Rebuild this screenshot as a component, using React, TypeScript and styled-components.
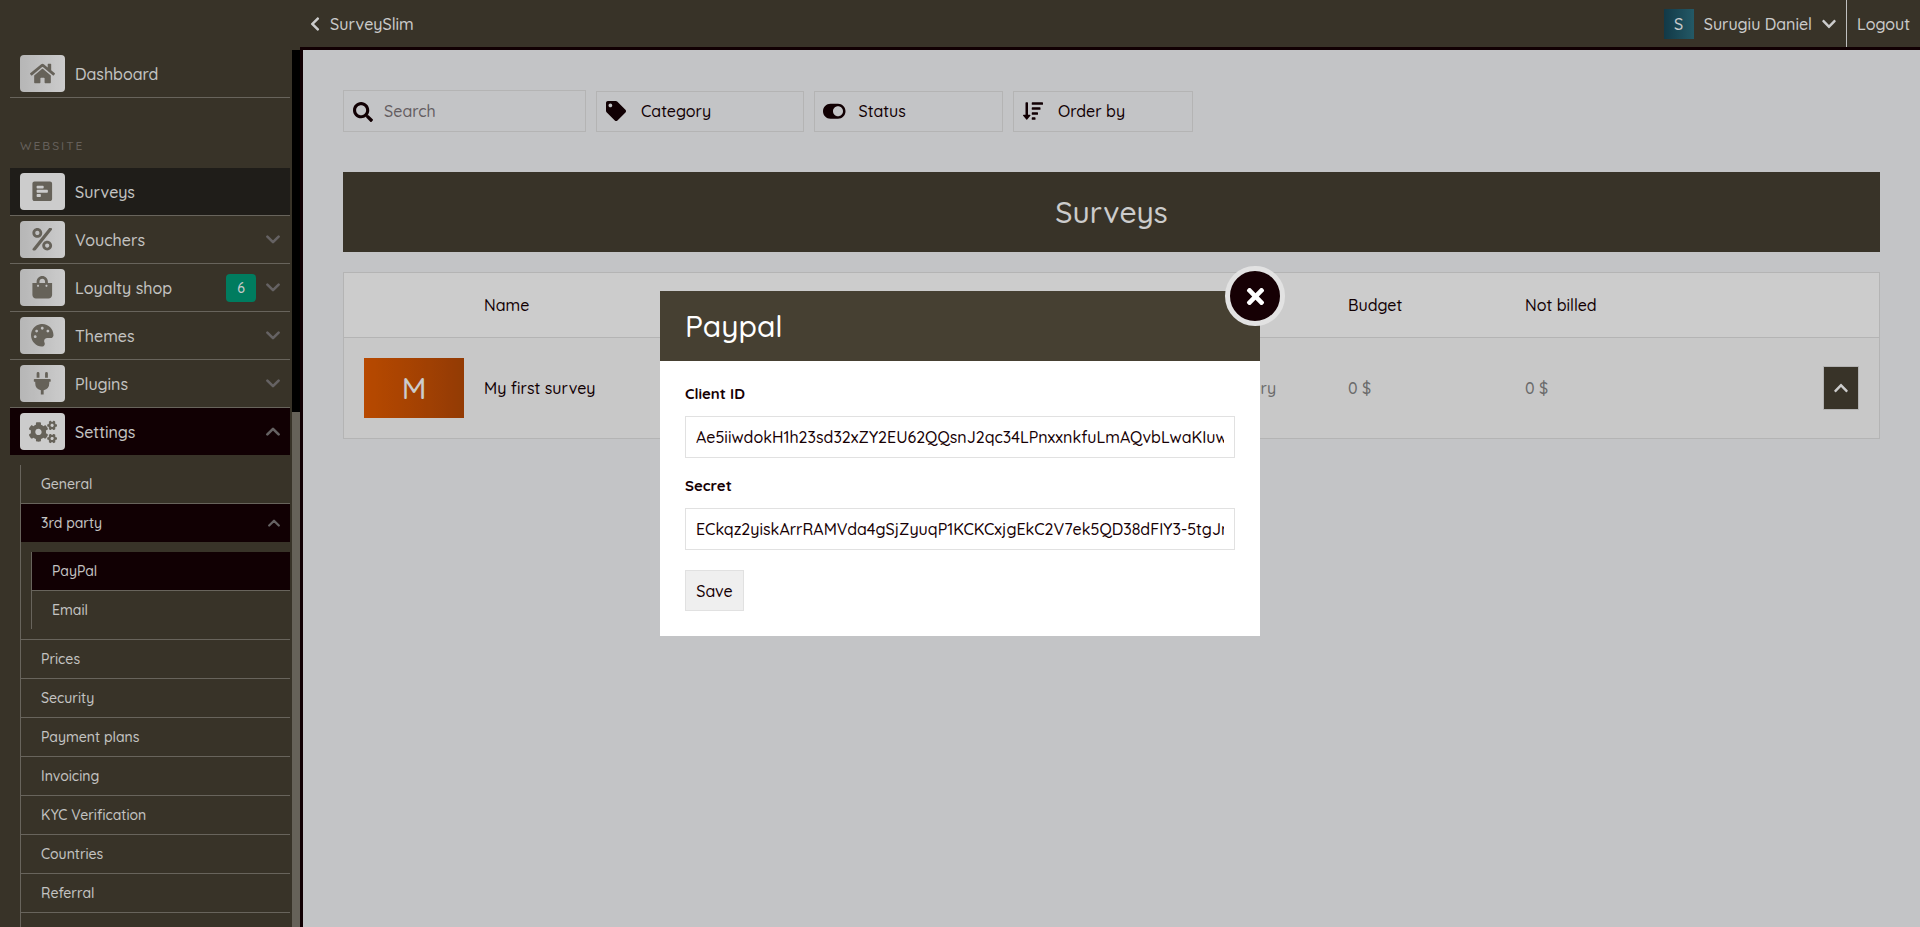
import React, { ReactNode } from 'react';
import styled, { createGlobalStyle, css } from 'styled-components';
import {
  FaChevronDown,
  FaChevronLeft,
  FaChevronUp,
  FaCogs,
  FaHome,
  FaPalette,
  FaPercent,
  FaPlug,
  FaPollH,
  FaSearch,
  FaShoppingBag,
  FaSortAmountDown,
  FaTag,
  FaTimes,
  FaToggleOn,
} from 'react-icons/fa';

const color = {
  brand: '#464032',
  dark: '#160004',
  line: '#837d73',
  border: '#e1e1e1',
  page: '#f4f5f8',
};

const GlobalStyle = createGlobalStyle`
  *, *::before, *::after { box-sizing: border-box; }
  html, body { margin: 0; height: 100%; overflow: hidden; }
  body {
    font-family: Quicksand, Lato, sans-serif;
    font-size: 16px;
    font-weight: 500;
    line-height: 20px;
    color: ${color.dark};
    background: ${color.page};
  }
  #root { height: 100%; }
  svg { display: block; flex: none; }
  input, button { font: inherit; color: inherit; }
`;

const Text = styled.span`
  white-space: nowrap;
`;

const Shell = styled.div`
  display: flex;
  flex-direction: column;
  height: 927px;
  overflow: hidden;
`;

/* Top bar */

const TopBar = styled.header`
  display: flex;
  flex: none;
  height: 50px;
  background: ${color.brand};
  color: #fff;
`;

const TopBarCorner = styled.div`
  width: 300px;
`;

const TopBarMain = styled.div`
  display: flex;
  flex: 1;
  justify-content: space-between;
  border-bottom: 3px solid ${color.dark};
`;

const BackLink = styled.div`
  display: flex;
  align-items: center;
  gap: 7px;
  padding: 1px 0 0 7px;
`;

const Account = styled.div`
  display: flex;
`;

const UserMenu = styled.div`
  display: flex;
  align-items: center;
  gap: 9px;
  padding: 1px 9px 0 0;
`;

const Avatar = styled.div`
  display: flex;
  align-items: center;
  justify-content: center;
  width: 30px;
  height: 30px;
  margin-right: 1px;
  background: linear-gradient(90deg, #17485a, #2d7080);
`;

const Logout = styled.div`
  display: flex;
  align-items: center;
  width: 74px;
  padding: 1px 0 0 10px;
  border-left: 1px solid #f0f0f0;
`;

/* Sidebar */

const Body = styled.div`
  display: flex;
  flex: 1;
  min-height: 0;
`;

const Sidebar = styled.aside`
  display: flex;
  flex: none;
  width: 303px;
  background: ${color.brand};
  border-right: 3px solid ${color.dark};
  color: #f6f6f4;
`;

const NavScroll = styled.nav`
  flex: 1;
  min-width: 0;
  padding: 0 2px 0 10px;
  overflow: hidden;
`;

const ScrollTrack = styled.div`
  display: flex;
  flex-direction: column;
  justify-content: flex-end;
  width: 8px;
  background: #000;
`;

const ScrollThumb = styled.div`
  height: 515px;
  background: #807b70;
`;

type Tone = 'plain' | 'current' | 'open';

const NavRow = styled.div<{ $tone: Tone }>`
  display: flex;
  align-items: center;
  gap: 10px;
  height: ${(p) => (p.$tone === 'open' ? 47 : 48)}px;
  padding: 0 10px;
  border-bottom: ${(p) => (p.$tone === 'open' ? 0 : 1)}px solid ${color.line};
  ${(p) => p.$tone === 'current' && css`background: #272520;`}
  ${(p) => p.$tone === 'open' && css`background: ${color.dark};`}
`;

const NavLabel = styled(Text)`
  flex: 1;
`;

const IconTile = styled.span<{ $solid?: boolean }>`
  display: flex;
  align-items: center;
  justify-content: center;
  width: 45px;
  height: 37px;
  border-radius: 4px;
  background: ${(p) => (p.$solid ? '#fff' : 'linear-gradient(90deg, #e4e4e4, #fff)')};
  color: #807b70;
`;

const Badge = styled.span`
  display: flex;
  align-items: center;
  justify-content: center;
  width: 30px;
  height: 28px;
  border-radius: 4px;
  background: #009b77;
  color: #fff;
  font-size: 14px;
`;

const SectionTitle = styled.div`
  padding: 38px 10px 12px;
  height: 70px;
  font-size: 12px;
  letter-spacing: 2px;
  color: #807a74;
`;

const SubMenu = styled.div`
  height: 500px;
  margin: 10px 0 0 10px;
  border-left: 1px solid ${color.line};
  font-size: 14px;
`;

const NestedMenu = styled.div`
  margin: 10px 0 0 10px;
  border-left: 1px solid ${color.line};
`;

const NestedGroup = styled.div`
  display: flow-root;
  padding-bottom: 10px;
  border-bottom: 1px solid ${color.line};
`;

const SubRow = styled.div<{ $filled?: boolean; $line?: boolean }>`
  display: flex;
  align-items: center;
  justify-content: space-between;
  height: ${(p) => (p.$line === false ? 38 : 39)}px;
  padding: 0 10px 0 20px;
  border-bottom: ${(p) => (p.$line === false ? 0 : 1)}px solid ${color.line};
  ${(p) => p.$filled && css`background: ${color.dark};`}
`;

/* Content */

const Content = styled.main`
  flex: 1;
  padding: 40px;
`;

const Filters = styled.div`
  display: flex;
  align-items: flex-end;
  gap: 10px;
  height: 42px;
`;

const Filter = styled.div<{ $w: number; $h?: number; $gap: number; $muted?: boolean }>`
  display: flex;
  align-items: center;
  gap: ${(p) => p.$gap}px;
  width: ${(p) => p.$w}px;
  height: ${(p) => p.$h ?? 41}px;
  padding: 0 0 1px 9px;
  border: 1px solid ${color.border};
  span { color: ${(p) => (p.$muted ? '#7d7578' : color.dark)}; }
`;

const ToggleFilter = styled(Filter)`
  padding-left: 8px;
`;

const SearchFilter = styled(Filter)`
  padding-bottom: 0;
  svg { margin-top: 2px; }
`;

const Banner = styled.h1`
  display: flex;
  align-items: center;
  justify-content: center;
  height: 80px;
  margin: 40px 0 20px;
  background: ${color.brand};
  color: #fff;
  font-size: 30px;
  font-weight: 500;
  line-height: 40px;
`;

const Table = styled.div`
  height: 167px;
  border: 1px solid ${color.border};
`;

const TableRow = styled.div<{ $head?: boolean }>`
  display: grid;
  grid-template-columns: 100px 699px 125px 157px 1fr auto;
  column-gap: 20px;
  align-items: center;
  height: ${(p) => (p.$head ? 65 : 100)}px;
  padding: 0 20px;
  background: ${(p) => (p.$head ? '#fff' : '#fbfbfb')};
  border-bottom: ${(p) => (p.$head ? 1 : 0)}px solid ${color.border};
`;

const Thumb = styled.div`
  display: flex;
  align-items: center;
  justify-content: center;
  height: 60px;
  background: linear-gradient(90deg, #e65c00, #b84a06);
  color: #fff;
  font-size: 30px;
`;

const Muted = styled(Text)`
  color: #868686;
`;

const RowToggle = styled.button`
  display: flex;
  align-items: center;
  justify-content: center;
  width: 36px;
  height: 44px;
  padding: 0;
  border: 1px solid #dfdfdf;
  background: ${color.brand};
  color: #fff;
`;

/* Dialog */

const Overlay = styled.div`
  position: fixed;
  inset: 0;
  display: flex;
  align-items: center;
  justify-content: center;
  background: rgba(0, 0, 0, 0.2);
`;

const Dialog = styled.section`
  position: relative;
  width: 600px;
  height: 345px;
  background: #fff;
`;

const DialogTitle = styled.h2`
  display: flex;
  align-items: center;
  height: 70px;
  margin: 0;
  padding: 0 25px;
  background: ${color.brand};
  color: #fff;
  font-size: 30px;
  font-weight: 500;
`;

const CloseButton = styled.button`
  position: absolute;
  top: -25px;
  right: -25px;
  display: flex;
  align-items: center;
  justify-content: center;
  width: 60px;
  height: 60px;
  padding: 0;
  border: 5px solid #e2e2e2;
  border-radius: 50%;
  background: ${color.dark};
  color: #fff;
`;

const Form = styled.form`
  display: flex;
  flex-direction: column;
  align-items: flex-start;
  gap: 20px;
  padding: 25px;
`;

const Field = styled.label`
  display: flex;
  flex-direction: column;
  gap: 15px;
  width: 100%;
`;

const FieldName = styled(Text)`
  height: 15px;
  font-size: 15px;
  font-weight: 700;
  line-height: 15px;
`;

const FieldInput = styled.input`
  width: 100%;
  height: 42px;
  padding: 0 10px;
  border: 1px solid ${color.border};
  outline: none;
  background: #fff;
`;

const SaveButton = styled.button`
  width: 59px;
  height: 41px;
  padding: 1px 0 0;
  border: 1px solid ${color.border};
  background: #efefef;
`;

function Caret({ up, small }: { up?: boolean; small?: boolean }) {
  return (
    <svg
      width={small ? 12 : 14}
      height={small ? 8 : 9}
      viewBox="0 0 14 9"
      fill="none"
      stroke="#7f7b7c"
      strokeWidth={2.6}
      strokeLinecap="round"
      strokeLinejoin="round"
    >
      <path d={up ? 'M1.4 7.4 7 1.8l5.6 5.6' : 'M1.4 1.6 7 7.2l5.6-5.6'} />
    </svg>
  );
}

interface NavItemProps {
  icon: ReactNode;
  label: string;
  tone?: Tone;
  badge?: string;
  caret?: 'up' | 'down';
}

function NavItem({ icon, label, tone = 'plain', badge, caret }: NavItemProps) {
  return (
    <NavRow $tone={tone}>
      <IconTile $solid={tone !== 'plain'}>{icon}</IconTile>
      <NavLabel>{label}</NavLabel>
      {badge && <Badge>{badge}</Badge>}
      {caret && <Caret up={caret === 'up'} />}
    </NavRow>
  );
}

const settingsItems = [
  'Prices',
  'Security',
  'Payment plans',
  'Invoicing',
  'KYC Verification',
  'Countries',
  'Referral',
];

export default function App() {
  return (
    <>
      <GlobalStyle />
      <Shell>
        <TopBar>
          <TopBarCorner />
          <TopBarMain>
            <BackLink>
              <FaChevronLeft size={16} />
              <Text>SurveySlim</Text>
            </BackLink>
            <Account>
              <UserMenu>
                <Avatar>S</Avatar>
                <Text>Surugiu Daniel</Text>
                <FaChevronDown size={16} />
              </UserMenu>
              <Logout>
                <Text>Logout</Text>
              </Logout>
            </Account>
          </TopBarMain>
        </TopBar>
        <Body>
          <Sidebar>
            <NavScroll>
              <NavItem icon={<FaHome size={25} />} label="Dashboard" />
              <SectionTitle>WEBSITE</SectionTitle>
              <NavItem icon={<FaPollH size={22.5} />} label="Surveys" tone="current" />
              <NavItem icon={<FaPercent size={22.5} />} label="Vouchers" caret="down" />
              <NavItem icon={<FaShoppingBag size={22.5} />} label="Loyalty shop" badge="6" caret="down" />
              <NavItem icon={<FaPalette size={22.5} />} label="Themes" caret="down" />
              <NavItem icon={<FaPlug size={22.5} />} label="Plugins" caret="down" />
              <NavItem icon={<FaCogs size={28} />} label="Settings" tone="open" caret="up" />
              <SubMenu>
                <SubRow>General</SubRow>
                <SubRow $filled $line={false}>
                  3rd party
                  <Caret up small />
                </SubRow>
                <NestedGroup>
                  <NestedMenu>
                    <SubRow $filled>PayPal</SubRow>
                    <SubRow $line={false}>Email</SubRow>
                  </NestedMenu>
                </NestedGroup>
                {settingsItems.map((label) => (
                  <SubRow key={label}>{label}</SubRow>
                ))}
              </SubMenu>
            </NavScroll>
            <ScrollTrack>
              <ScrollThumb />
            </ScrollTrack>
          </Sidebar>
          <Content>
            <Filters>
              <SearchFilter $w={243} $h={42} $gap={11} $muted>
                <FaSearch size={20} />
                <Text>Search</Text>
              </SearchFilter>
              <Filter $w={208} $gap={15}>
                <FaTag size={20} />
                <Text>Category</Text>
              </Filter>
              <ToggleFilter $w={189} $gap={13}>
                <FaToggleOn size={22.5} />
                <Text>Status</Text>
              </ToggleFilter>
              <Filter $w={180} $gap={15}>
                <FaSortAmountDown size={20} />
                <Text>Order by</Text>
              </Filter>
            </Filters>
            <Banner>Surveys</Banner>
            <Table>
              <TableRow $head>
                <span />
                <Text>Name</Text>
                <span />
                <Text>Budget</Text>
                <Text>Not billed</Text>
              </TableRow>
              <TableRow>
                <Thumb>M</Thumb>
                <Text>My first survey</Text>
                <Muted>Summary</Muted>
                <Muted>0 $</Muted>
                <Muted>0 $</Muted>
                <RowToggle type="button">
                  <FaChevronUp size={16} />
                </RowToggle>
              </TableRow>
            </Table>
          </Content>
        </Body>
      </Shell>
      <Overlay>
        <Dialog>
          <DialogTitle>Paypal</DialogTitle>
          <CloseButton type="button">
            <FaTimes size={25} />
          </CloseButton>
          <Form>
            <Field>
              <FieldName>Client ID</FieldName>
              <FieldInput
                readOnly
                value="Ae5iiwdokH1h23sd32xZY2EU62QQsnJ2qc34LPnxxnkfuLmAQvbLwaKIuwx7"
              />
            </Field>
            <Field>
              <FieldName>Secret</FieldName>
              <FieldInput
                readOnly
                value="ECkqz2yiskArrRAMVda4gSjZyuqP1KCKCxjgEkC2V7ek5QD38dFIY3-5tgJn4"
              />
            </Field>
            <SaveButton type="button">Save</SaveButton>
          </Form>
        </Dialog>
      </Overlay>
    </>
  );
}
